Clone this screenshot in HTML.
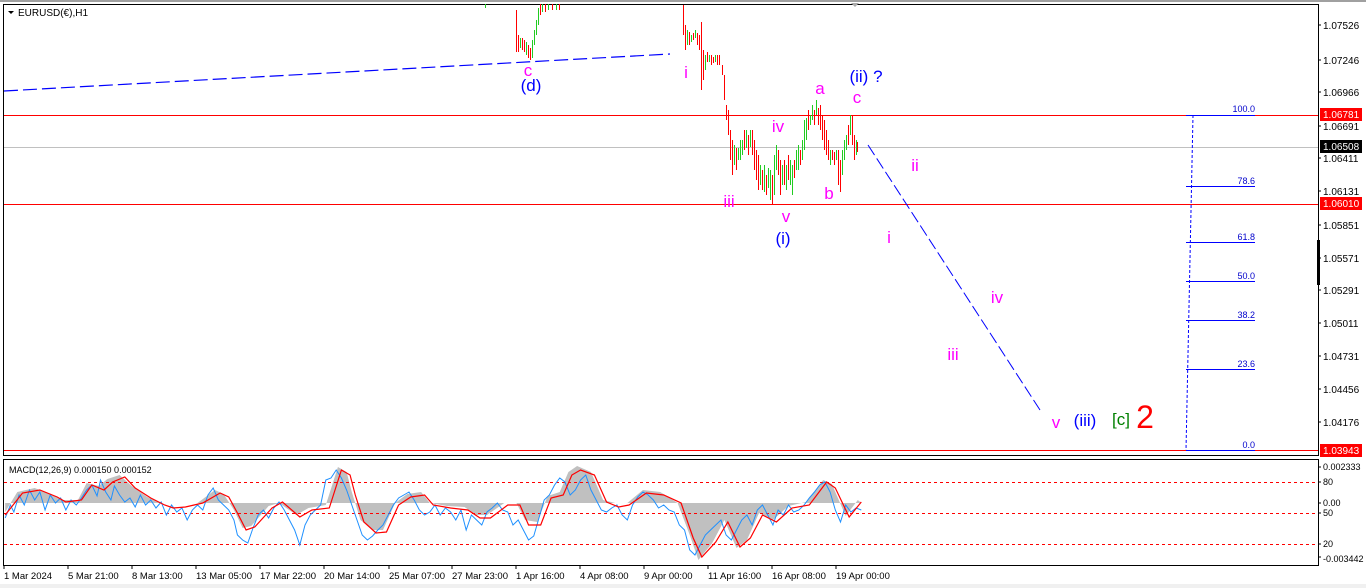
<!DOCTYPE html>
<html><head><meta charset="utf-8"><style>
html,body{margin:0;padding:0;background:#fff;width:1366px;height:588px;overflow:hidden}
svg{display:block}
text{font-family:"Liberation Sans",Tahoma,sans-serif}
</style></head><body>
<svg width="1366" height="588" viewBox="0 0 1366 588" xmlns="http://www.w3.org/2000/svg">
<rect x="0" y="0" width="1366" height="588" fill="#fff"/>
<rect x="0" y="0" width="1366" height="2" fill="#a0a0a0"/>
<rect x="0" y="584" width="1366" height="4" fill="#f0f0f0"/>
<path d="M3.5 4.5H1318.5V455.5H3.5Z" fill="none" stroke="#000" stroke-width="1"/>
<path d="M3.5 459.5H1318.5V565.5H3.5Z" fill="none" stroke="#000" stroke-width="1"/>
<path d="M8 11h6l-3 3z" fill="#000"/>
<text x="18" y="16" font-size="10" fill="#000">EURUSD(€),H1</text>
<line x1="4" y1="115.5" x2="1318" y2="115.5" stroke="#f00"/>
<line x1="4" y1="147.5" x2="1318" y2="147.5" stroke="#c0c0c0"/>
<line x1="4" y1="204.5" x2="1318" y2="204.5" stroke="#f00"/>
<line x1="4" y1="450.5" x2="1318" y2="450.5" stroke="#f00"/>
<line x1="4" y1="91" x2="670" y2="54" stroke="#00f" stroke-width="1.2" stroke-dasharray="14,5"/>
<line x1="868" y1="145" x2="1040" y2="410" stroke="#00f" stroke-width="1" stroke-dasharray="12,4"/>
<path d="M851 3l4 4l4-4z" fill="#aaa"/>
<g transform="translate(0.5,0)" shape-rendering="crispEdges">
<path stroke="#f00" stroke-width="1" fill="none" d="M516 10V52M518 35V52M522 38V50M524 40V52M528 45V58M530 48V60M540 4V15M545 4V12M552 4V10M559 4V10
M683 5V35M685 25V50M689 32V45M693 33V40M697 33V45M699 35V50M701 22V90M703 50V80M707 52V62M711 55V65M713 57V63M717 55V65M719 55V65M722 65V75M724 75V100M726 105V120M728 110V135M730 130V160M732 140V175M736 148V170M744 130V150M748 135V155M752 130V155M754 140V170M756 150V180M758 155V190M762 170V190M766 175V195M772 175V205M778 150V175M780 160V195M784 160V185M788 155V180M794 160V178M800 150V165M808 110V130M814 110V125M818 108V125M820 105V130M822 115V140M824 120V150M826 130V155M828 140V160M832 150V160M834 152V165M838 150V185M840 160V192M848 125V145M852 115V145M854 135V160M857 142V152"/>
<path stroke="#22cc22" stroke-width="1" fill="none" d="M485 4V8M520 38V48M526 42V55M532 40V58M534 30V45M536 20V35M538 8V25M542 4V12M548 4V10M556 4V10
M687 30V45M691 35V42M695 30V38M705 55V70M709 55V62M715 55V62M734 145V165M738 148V160M740 140V160M742 140V155M746 130V148M750 130V147M760 165V185M764 165V192M768 168V188M770 170V200M774 155V195M776 145V170M782 165V185M786 165V190M790 160V185M792 165V195M796 150V170M798 145V170M802 140V160M804 120V150M806 118V140M810 115V125M812 105V120M816 100V115M830 150V165M836 150V160M842 150V175M844 140V160M846 135V150M850 115V135M856 140V155"/>
</g>
<g font-size="17" fill="#ff00ff" text-anchor="middle">
<text x="528" y="76">c</text><text x="686" y="78">i</text><text x="729" y="207">iii</text>
<text x="778" y="132">iv</text><text x="786" y="222">v</text><text x="820" y="94">a</text>
<text x="829" y="199">b</text><text x="857" y="103">c</text><text x="915" y="171">ii</text>
<text x="889" y="243">i</text><text x="997" y="303">iv</text><text x="953" y="360">iii</text><text x="1056" y="428">v</text>
</g>
<g font-size="17" fill="#0000ff" text-anchor="middle">
<text x="531" y="91">(d)</text><text x="783" y="244">(i)</text>
<text x="866" y="82">(ii) ?</text><text x="1085" y="426">(iii)</text>
</g>
<text x="1121" y="425" font-size="17" fill="#008000" text-anchor="middle">[c]</text>
<text x="1145" y="428" font-size="32" fill="#f00" text-anchor="middle">2</text>
<g stroke="#00f" stroke-width="1">
<line x1="1186" y1="115.5" x2="1255" y2="115.5"/><line x1="1186" y1="186.5" x2="1255" y2="186.5"/>
<line x1="1186" y1="242.5" x2="1255" y2="242.5"/><line x1="1186" y1="281.5" x2="1255" y2="281.5"/>
<line x1="1186" y1="320.5" x2="1255" y2="320.5"/><line x1="1186" y1="369.5" x2="1255" y2="369.5"/>
<line x1="1186" y1="450.5" x2="1255" y2="450.5"/>
<line x1="1193" y1="115" x2="1186" y2="450" stroke-dasharray="3,2"/>
</g>
<g font-size="9" fill="#00c" text-anchor="end">
<text x="1255" y="112">100.0</text><text x="1255" y="184">78.6</text><text x="1255" y="240">61.8</text>
<text x="1255" y="279">50.0</text><text x="1255" y="318">38.2</text><text x="1255" y="367">23.6</text><text x="1255" y="448">0.0</text>
</g>
<g font-size="10" fill="#000">
<text x="1323" y="29">1.07526</text><text x="1323" y="64">1.07246</text><text x="1323" y="96">1.06966</text>
<text x="1323" y="130">1.06691</text><text x="1323" y="162">1.06411</text><text x="1323" y="195">1.06131</text>
<text x="1323" y="229">1.05851</text><text x="1323" y="262">1.05571</text><text x="1323" y="294">1.05291</text>
<text x="1323" y="327">1.05011</text><text x="1323" y="360">1.04731</text><text x="1323" y="393">1.04456</text>
<text x="1323" y="426">1.04176</text>
</g>
<g stroke="#000"><path d="M1318 25h3M1318 60h3M1318 92h3M1318 126h3M1318 158h3M1318 191h3M1318 225h3M1318 258h3M1318 290h3M1318 323h3M1318 356h3M1318 389h3M1318 422h3"/></g>
<rect x="1317" y="240" width="3" height="45" fill="#000"/>
<rect x="1320" y="108" width="42" height="13" fill="#f00"/><text x="1323" y="118" font-size="10" fill="#fff">1.06781</text>
<rect x="1320" y="140" width="42" height="13" fill="#000"/><text x="1323" y="150" font-size="10" fill="#fff">1.06508</text>
<rect x="1320" y="197" width="42" height="13" fill="#f00"/><text x="1323" y="207" font-size="10" fill="#fff">1.06010</text>
<rect x="1320" y="444" width="42" height="13" fill="#f00"/><text x="1323" y="454" font-size="10" fill="#fff">1.03943</text>
<text x="9" y="473" font-size="9" fill="#000">MACD(12,26,9) 0.000150 0.000152</text>
<g transform="scale(1.733,1)">
<polygon fill="#c0c0c0" points="3,503 3,512 10,492 20,488 30,495 36,500 45,500 50,483 57,486 62,479 69,475 76,486 85,497 93,503 105,503 114,503 124,490 129,494 135,510 140,528 145,526 155,506 161,503 171,515 178,508 188,505 195,467 200,472 203,492 208,520 215,530 221,530 228,503 235,494 243,492 248,503 258,506 268,507 275,515 281,515 291,503 298,503 303,520 310,522 316,496 323,492 328,472 333,466 341,472 348,500 355,503 362,503 371,490 381,492 391,503 398,535 403,560 411,543 418,520 425,548 431,540 438,513 446,520 455,506 465,502 475,480 480,484 488,516 495,500 497,503"/>
</g>
<g stroke="#f00" stroke-width="1" fill="none" stroke-dasharray="3,3">
<line x1="4" y1="482.5" x2="1318" y2="482.5"/><line x1="4" y1="513.5" x2="1318" y2="513.5"/><line x1="4" y1="544.5" x2="1318" y2="544.5"/>
</g>
<g transform="scale(1.733,1)">
<polyline fill="none" stroke="#1e90ff" stroke-width="1" vector-effect="non-scaling-stroke" points="3,518 6,505 8,512 11,495 14,505 17,490 20,500 23,492 26,510 29,495 32,503 35,498 38,510 41,500 44,505 47,498 50,490 53,485 56,496 58,480 61,492 64,500 66,486 69,495 72,502 75,498 78,507 81,495 84,505 87,500 90,508 93,502 96,515 99,505 102,512 105,508 108,520 111,510 114,505 117,510 120,495 123,488 126,500 129,505 132,510 135,520 137,535 140,540 143,543 146,528 149,515 152,510 155,518 158,508 161,502 164,510 167,520 170,530 173,545 176,525 179,515 182,510 185,505 188,480 191,478 194,470 197,478 200,490 203,505 206,520 209,535 212,540 215,536 218,530 221,525 224,515 227,505 230,498 233,495 236,492 239,500 242,510 245,515 248,512 251,505 254,515 257,508 260,512 263,520 266,510 269,530 272,515 275,520 278,525 281,512 284,508 287,503 290,510 293,512 296,525 299,520 302,530 305,540 308,536 311,518 314,500 317,495 320,485 323,478 326,482 329,495 332,490 335,480 338,475 341,490 344,500 347,510 350,512 353,508 356,505 359,515 362,520 365,505 368,497 371,492 374,495 377,500 380,508 383,505 386,510 389,512 392,525 395,530 398,550 401,555 404,545 407,535 410,530 413,525 416,520 419,535 422,540 425,530 428,520 431,515 434,525 437,510 440,505 443,515 446,525 449,510 452,515 455,505 458,512 461,510 464,505 467,498 470,492 473,485 476,482 479,492 482,510 485,522 488,505 491,512 494,508 497,510"/>
<polyline fill="none" stroke="#f00" stroke-width="1.2" vector-effect="non-scaling-stroke" points="3,515 13,493 23,490 33,497 38,502 47,500 53,485 60,490 65,482 72,477 78,488 87,498 95,505 100,508 107,507 117,503 127,493 132,497 137,513 142,530 147,527 157,508 163,502 173,517 180,510 190,508 197,470 202,475 205,495 210,522 217,533 223,532 230,505 237,497 245,495 250,505 260,508 270,510 277,518 283,518 293,505 300,505 305,525 312,525 318,498 325,495 330,475 335,470 343,475 350,502 357,507 363,505 373,493 383,495 393,503 400,538 405,557 413,542 420,522 427,547 433,538 440,515 448,522 457,508 467,505 477,482 482,488 490,517 497,502"/>
</g>
<g stroke="#000"><path d="M1318 467h3M1318 482h3M1318 503h3M1318 513h3M1318 544h3M1318 557h3"/></g>
<g font-size="9" fill="#000">
<text x="1323" y="470">0.002333</text><text x="1323" y="485">80</text><text x="1323" y="506">0.00</text>
<text x="1323" y="516">50</text><text x="1323" y="547">20</text><text x="1323" y="562">-0.003442</text>
</g>
<g font-size="9.5" fill="#000">
<text x="4" y="579">1 Mar 2024</text><text x="68" y="579">5 Mar 21:00</text><text x="132" y="579">8 Mar 13:00</text>
<text x="196" y="579">13 Mar 05:00</text><text x="260" y="579">17 Mar 22:00</text><text x="324" y="579">20 Mar 14:00</text>
<text x="389" y="579">25 Mar 07:00</text><text x="452" y="579">27 Mar 23:00</text><text x="516" y="579">1 Apr 16:00</text>
<text x="580" y="579">4 Apr 08:00</text><text x="644" y="579">9 Apr 00:00</text><text x="708" y="579">11 Apr 16:00</text>
<text x="772" y="579">16 Apr 08:00</text><text x="836" y="579">19 Apr 00:00</text>
</g>
<g stroke="#000"><path d="M4 566v3M68 566v3M132 566v3M196 566v3M260 566v3M324 566v3M389 566v3M452 566v3M516 566v3M580 566v3M644 566v3M708 566v3M772 566v3M836 566v3"/></g>
</svg>
</body></html>
